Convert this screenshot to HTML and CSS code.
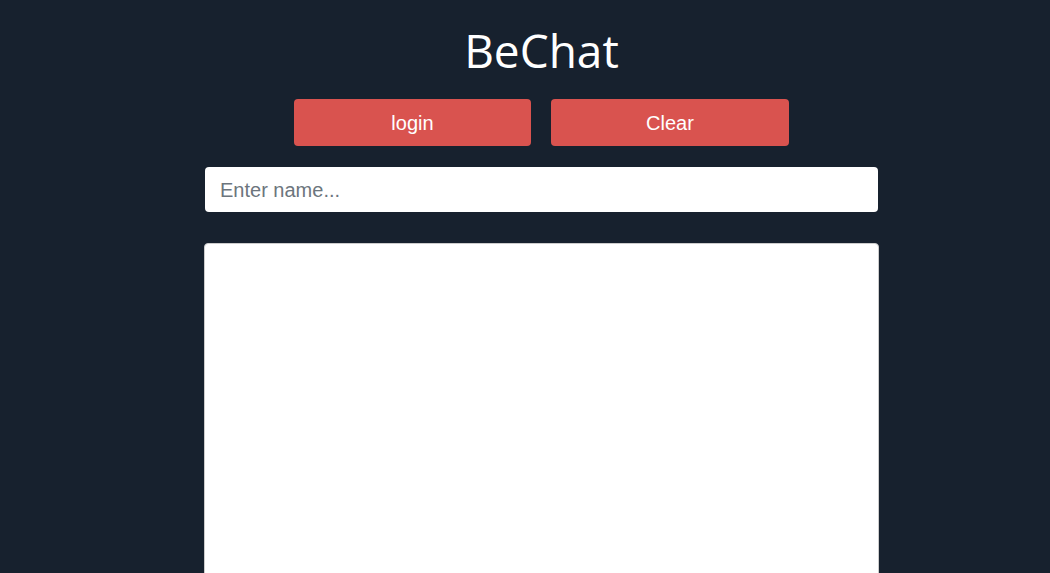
FILE: index.html
```html
<!DOCTYPE html>
<html>
<head>
<meta charset="utf-8">
<link rel="stylesheet" href="styles.css">
</head>
<body>
<div class="page">
  <main class="app">
    <h1 class="title">BeChat</h1>
    <div class="actions">
      <button class="btn">login</button>
      <button class="btn btn-wide">Clear</button>
    </div>
    <input class="name" type="text" placeholder="Enter name...">
    <div class="chat"></div>
  </main>
</div>
</body>
</html>
```
FILE: styles.css
```css
html, body {
  margin: 0;
  height: 100%;
  background: #17212e;
  overflow: hidden;
}
.page {
  display: flex;
  justify-content: center;
  padding-left: 33px;
}
.app {
  width: 675px;
  display: flex;
  flex-direction: column;
  align-items: center;
}
.title {
  margin: 18px 0 0;
  font-family: "Open Sans", sans-serif;
  font-weight: 400;
  font-size: 46px;
  line-height: 64px;
  color: #fff;
}
.actions {
  display: flex;
  gap: 20px;
  margin-top: 17px;
}
.btn {
  width: 237px;
  height: 47px;
  border: none;
  border-radius: 4px;
  background: #d9534f;
  color: #fff;
  font-family: "Liberation Sans", Arial, sans-serif;
  font-size: 20px;
  padding: 2px 0 0;
}
.btn-wide {
  width: 238px;
}
.name {
  box-sizing: border-box;
  align-self: stretch;
  margin: 21px 1px 0 1px;
  height: 45px;
  border: none;
  border-radius: 4px;
  background: #fff;
  padding: 2px 15px 0;
  font-family: "Liberation Sans", Arial, sans-serif;
  font-size: 20px;
  color: #333;
  outline: none;
}
.name::placeholder {
  color: #6c757d;
}
.chat {
  align-self: stretch;
  margin-top: 31px;
  height: 400px;
  background: #fff;
  border: 1px solid #ccc;
  border-radius: 4px;
}
```
